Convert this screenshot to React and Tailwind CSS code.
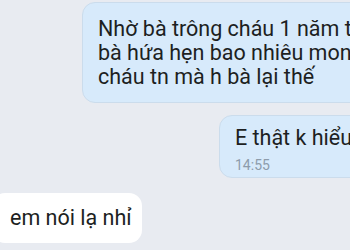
import React from "react";

const bubbleText = "text-[21.5px] leading-[24px] text-[#1d1f22] whitespace-nowrap";

export default function App() {
  return (
    <div className="w-[350px] h-[250px] overflow-hidden bg-[#e8ebf1] font-['Roboto','Liberation_Sans',sans-serif] flex flex-col pt-[2px]">
      {/* outgoing, long */}
      <div className={`ml-[82px] w-[300px] shrink-0 rounded-[13px] border border-[#cbdcec] bg-[#d7eafb] pl-[15px] pt-[14px] pb-[13px] ${bubbleText}`}>
        <div>Nhờ bà trông cháu 1 năm trời</div>
        <div>bà hứa hẹn bao nhiêu mon</div>
        <div>cháu tn mà h bà lại thế</div>
      </div>

      {/* outgoing, with time */}
      <div className="mt-[12px] ml-[219px] w-[160px] shrink-0 rounded-[13px] border border-[#cbdcec] bg-[#d7eafb] pl-[15px] pt-[10px] pb-[4px]">
        <div className={bubbleText}>E thật k hiểu</div>
        <div className="mt-[7px] text-[14px] leading-[16px] text-[#8d9cab]">14:55</div>
      </div>

      {/* incoming */}
      <div className="mt-[15px] -ml-[8px] w-fit shrink-0 rounded-[13px] bg-white pl-[18px] pr-[10px] pt-[13px] pb-[13px]">
        <div className={bubbleText}>em nói lạ nhỉ</div>
      </div>
    </div>
  );
}
